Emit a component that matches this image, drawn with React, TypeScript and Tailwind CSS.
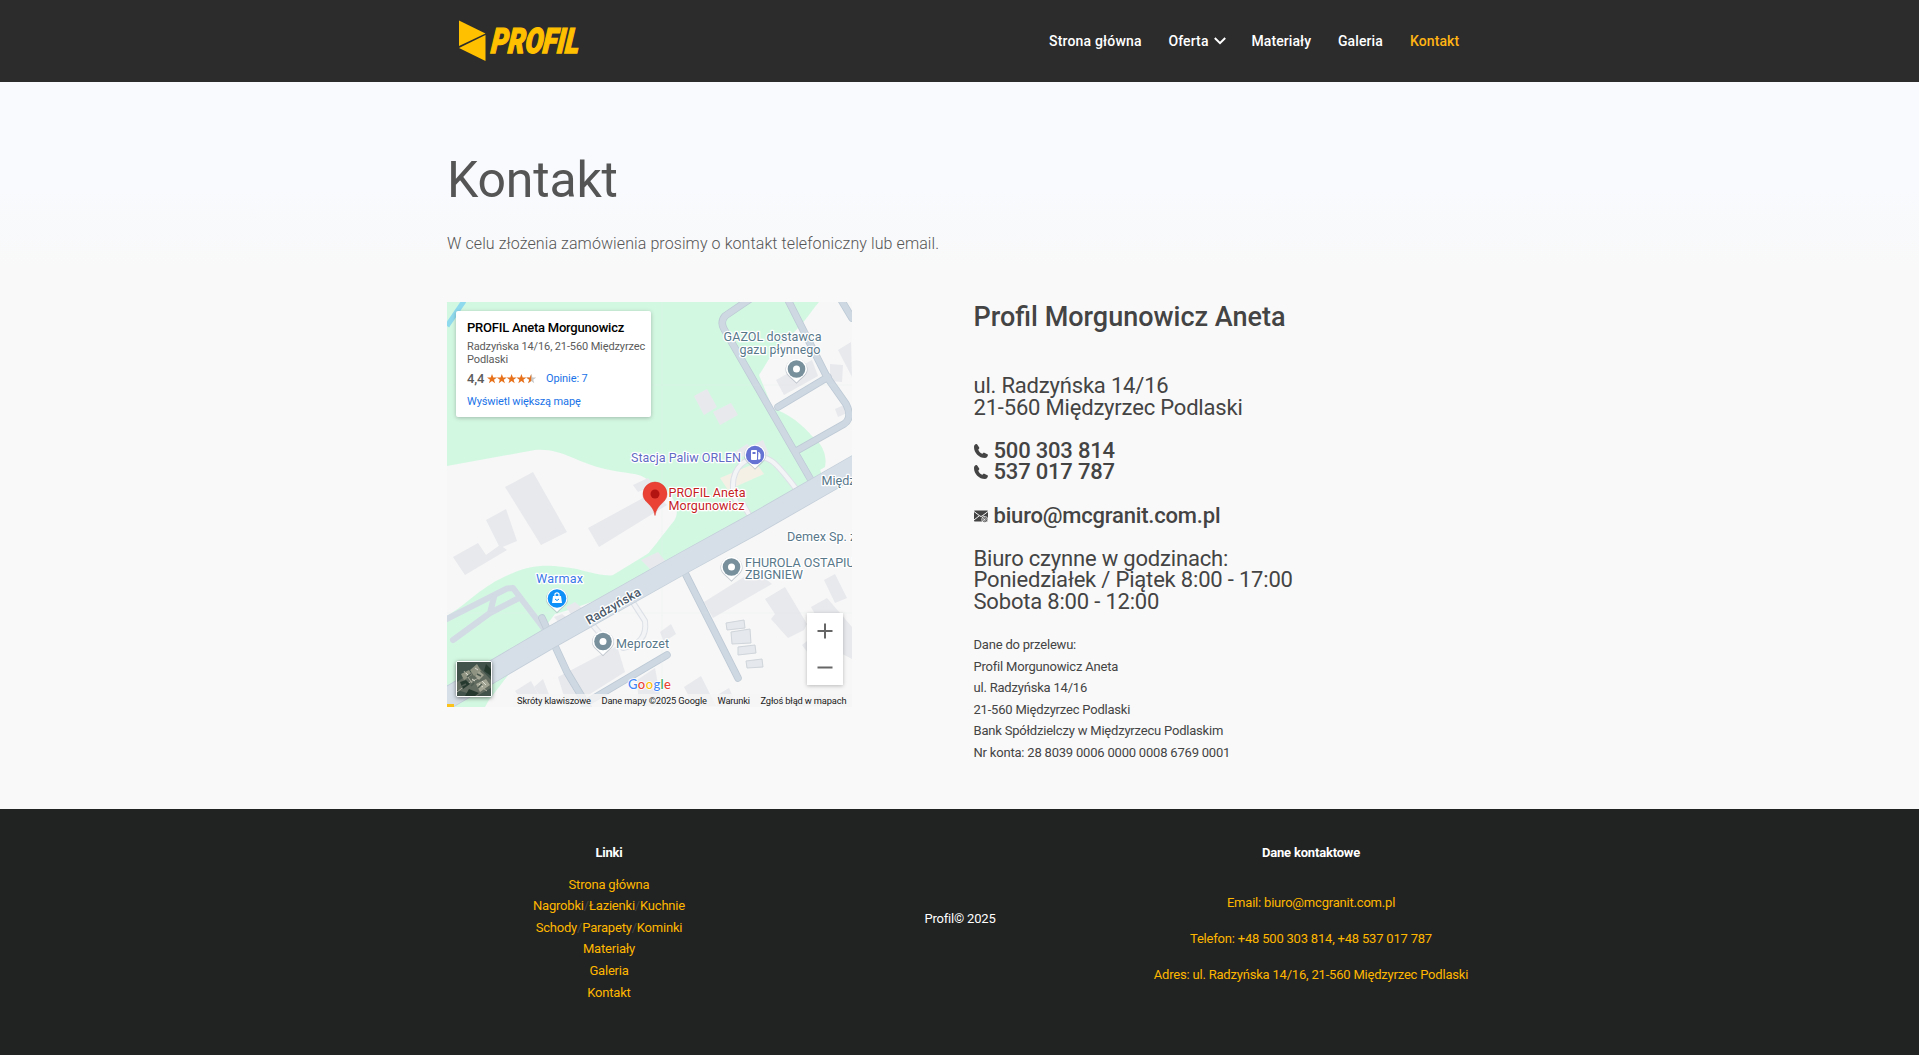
import React from "react";

type Label = {
  x: number;
  y: number;
  text: string;
  fill: string;
  width?: number;
};

const labels: Label[] = [
  { x: 276.500, y: 39, text: "GAZOL dostawca", fill: "#58788a", width: 98 },
  { x: 292.500, y: 52, text: "gazu płynnego", fill: "#58788a", width: 81 },
  { x: 184, y: 160, text: "Stacja Paliw ORLEN", fill: "#5f6bc4", width: 110 },
  { x: 374.500, y: 183, text: "Międzyrzec", fill: "#58788a" },
  { x: 221.500, y: 195, text: "PROFIL Aneta", fill: "#c5221f", width: 77 },
  { x: 221.500, y: 207.500, text: "Morgunowicz", fill: "#c5221f", width: 76 },
  { x: 340, y: 239, text: "Demex Sp. z o.o.", fill: "#58788a" },
  { x: 298, y: 265, text: "FHUROLA OSTAPIUK", fill: "#58788a" },
  { x: 298, y: 277, text: "ZBIGNIEW", fill: "#58788a", width: 58 },
  { x: 89, y: 281, text: "Warmax", fill: "#3b78e7", width: 47 },
  { x: 169, y: 346, text: "Meprozet", fill: "#58788a", width: 53 },
];

const buildings = [
  "58,185 86,170 120,230 94,243",
  "39,218 59,207 70,239 53,246",
  "6,255 31,241 39,253 53,243 60,248 18,273",
  "141,226 207,190 220,203 152,245",
  "186,183 201,176 207,183 191,190",
  "194,258 211,250 219,260 204,268",
  "119,305 128,300 136,307 126,315",
  "107,315 115,312 122,317 113,322",
  "111,375 170,344 178,370 124,404 120,404",
  "68,389 84,379 97,403 79,404",
  "87,385 96,377 106,403 99,404",
  "247,94 260,87 270,105 257,113",
  "266,110 284,101 291,113 273,123",
  "329,78 365,58 371,74 337,93",
  "391,48 404,40 405,75",
  "383,62 396,63 395,80 383,79",
  "388,107 397,103 400,111 391,115",
  "286,151 300,142 307,148 295,155",
  "308,142 316,138 322,152 311,157",
  "257,300 308,268 325,282 266,316",
  "318,297 338,285 360,322 357,328 341,336 324,317 328,312",
  "377,278 388,272 400,296 388,301",
  "364,305 380,296 405,325 405,357 384,346 374,323",
  "355,343 364,336 376,350 366,358",
  "213,330 224,322 229,332 217,340",
  "237,385 254,374 269,404 247,404",
  "190,378 208,366 215,404 192,404",
  "272,392 282,386 290,404 270,404",
  "350,402 375,393 376,404 350,404",
];

const outlined = [
  "279,321 297,318 298,326 280,328",
  "284,330 303,327 304,341 285,342",
  "291,345 308,343 309,351 291,353",
  "299,359 315,357 316,365 300,366",
];

function Pin({ x, y, fill, r = 8 }: { x: number; y: number; fill: string; r?: number }) {
  return (
    <g transform={`translate(${x} ${y})`}>
      <path d="M-11 0A11 11 0 0 1 11 0C11 5 7 7 0 14C-7 7-11 5-11 0Z" fill="#9aa5b1" opacity=".55" transform="translate(0 .8)" />
      <path d="M-10.500 0A10.500 10.500 0 0 1 10.500 0C10.500 5 6.500 7 0 13.500C-6.500 7-10.500 5-10.500 0Z" fill="#fff" />
      <circle r={r + 0.8} fill={fill} />
    </g>
  );
}

function Map() {
  return (
    <svg width="405" height="405" viewBox="0 0 405 405" className="block font-[Roboto,sans-serif]">
      <rect width="405" height="405" fill="#f7f7f7" />
      <path d="M0 0H372C362 12 354 26 338 38C326 48 319 63 312 73L326 107C345 112 360 128 365 134C377 143 380 155 378 165L216 263C195 280 150 300 108 312L42 398L38 405H0V314C23 300 35 283 66 271C85 262 105 262 130 267C160 275 172 277 190 264C207 246 213 236 227 219C234 207 227 197 220 189L201 178C192 170 178 172 158 167C130 161 115 146 88 148L0 164Z" fill="#d3f8e2" />
      <path d="M372 164L330 184L299 205L228 235L122 300L108 309C150 300 184 287 240 260C310 224 330 212 376 177Z" fill="#d3f8e2" />
      <path d="M0 24L17 -1" stroke="#90daee" strokeWidth="5" />
      <g fill="#e8e9ed">
        {buildings.map((p) => (
          <polygon key={p} points={p} />
        ))}
      </g>
      <polygon points="272,172 308,157 316,168 280,184" fill="#f5f0e6" transform="translate(1 4)" />
      <g fill="#e5e8ec" stroke="#cfd5db">
        {outlined.map((p) => (
          <polygon key={p} points={p} />
        ))}
      </g>
      <g fill="none" strokeLinecap="round" strokeLinejoin="round">
        <g stroke="#d2dae4" strokeWidth="6">
          <path d="M-4 319L60 286.500L66 286L101 332" />
          <path d="M6 338L43 311L72 296M47 295L43 311" />
        </g>
        <g stroke="#dde1e7" strokeWidth="6">
          <path d="M292 206L287 194C283 175 290 162 303 157C322 150 330 162 350 188M305 218L296 202" />
          <path d="M187 302L198 319C200 335 192 343 176 346M144 321L155 334" />
        </g>
        <g stroke="#f2f4f6" strokeWidth="4">
          <path d="M292 206L287 194C283 175 290 162 303 157C322 150 330 162 350 188M305 218L296 202" />
          <path d="M187 302L198 319C200 335 192 343 176 346M144 321L155 334" />
        </g>
        <g stroke="#bdc9d5" strokeWidth="7.500">
          <path d="M95 316L120 370L141 405M237 269L291 376M137 402L220 353" />
          <path d="M306 -5L278 14Q273 20 277 27L368 185M340 -4L380 75L399 102Q406 116 397 122L351 148M381 75L331 105M393 -4L405 16" />
        </g>
        <g stroke="#cdd8e2" strokeWidth="6">
          <path d="M95 316L120 370L141 405M237 269L291 376M137 402L220 353" />
          <path d="M306 -5L278 14Q273 20 277 27L368 185M340 -4L380 75L399 102Q406 116 397 122L351 148M381 75L331 105M393 -4L405 16" />
        </g>
        <path d="M-8 401L101 337L238 260L309 221L410 163" stroke="#c3ced9" strokeWidth="22" />
        <path d="M-8 401L101 337L238 260L309 221L410 163" stroke="#d6dfe8" strokeWidth="20.500" />
      </g>
      <path d="M0 311H405M0 83H405M215 0V405" stroke="#dce4e7" strokeWidth=".5" opacity=".35" />
      <Pin x={349.5} y={67} fill="#78909c" />
      <circle cx="349.500" cy="67" r="3.500" fill="#fff" />
      <Pin x={308} y={153} fill="#6673d3" r={8.4} />
      <path d="M304.500 148.500H309.500V157.500H304.500ZM311.500 150L313 152V157H311" fill="#fff" stroke="#fff" />
      <path d="M305.500 150H308.500V152H305.500Z" fill="#6673d3" />
      <Pin x={284.5} y={265} fill="#78909c" />
      <circle cx="284.500" cy="265" r="3.500" fill="#fff" />
      <Pin x={156} y={339.5} fill="#78909c" />
      <circle cx="156" cy="339.500" r="3.500" fill="#fff" />
      <Pin x={110} y={296.5} fill="#0f8ff8" r={8.5} />
      <path d="M106 294H114L115 301H105Z" fill="#fff" />
      <path d="M108 295V292Q110 290 112 292V295" fill="none" stroke="#fff" strokeWidth="1.200" />
      <path d="M108 297Q110 300 112 297" fill="none" stroke="#0f8ff8" />
      <path d="M208 213.500C206 201 196 201 196 192A12 12 0 0 1 220 192C220 201 210 201 208 213.500Z" fill="#ea4335" stroke="#d93025" strokeWidth=".5" />
      <circle cx="208" cy="192" r="4.500" fill="#b31412" />
      <g fontSize="12.600" paintOrder="stroke" stroke="#fff" strokeWidth="2.500" strokeLinejoin="round">
        {labels.map((l) => (
          <text key={l.text} x={l.x} y={l.y} fill={l.fill} textLength={l.width} lengthAdjust="spacing">
            {l.text}
          </text>
        ))}
        <text x="142" y="323" fill="#4c5b6c" fontWeight="500" textLength="61" transform="rotate(-30 142 323)">
          Radzyńska
        </text>
      </g>
      <rect y="402" width="7" height="3" fill="#fbc21c" />
      <rect x="66" y="392" width="339" height="13" fill="#f5f5f5" opacity=".8" />
      <g fontSize="9.300" fill="#1a1a1a">
        <text x="70" y="402" textLength="74">Skróty klawiszowe</text>
        <text x="154.500" y="402" textLength="105.500">Dane mapy ©2025 Google</text>
        <text x="270.500" y="402" textLength="32.500">Warunki</text>
        <text x="313.500" y="402" textLength="86">Zgłoś błąd w mapach</text>
      </g>
      <text x="181" y="386.500" fontSize="13" fontWeight="500" textLength="43" paintOrder="stroke" stroke="#fff" strokeWidth="1.500" fontFamily="Lato, sans-serif">
        <tspan fill="#4285f4">G</tspan>
        <tspan fill="#ea4335">o</tspan>
        <tspan fill="#fbbc04">o</tspan>
        <tspan fill="#4285f4">g</tspan>
        <tspan fill="#34a853">l</tspan>
        <tspan fill="#ea4335">e</tspan>
      </text>
    </svg>
  );
}

const star = "M5 0L6.300 3.500H10L7 5.700L8.100 9.300L5 7.100L1.900 9.300L3 5.700L0 3.500H3.700Z";

function MapCard() {
  return (
    <div className="absolute left-[9px] top-[9px] h-[106px] w-[195px] rounded-[2px] bg-white px-[11px] pt-2 shadow-[0_1px_4px_rgba(0,0,0,0.25)]">
      <div className="text-[13px] font-medium leading-[17px] tracking-[-0.23px] text-black">PROFIL Aneta Morgunowicz</div>
      <div className="mt-1 text-[11px] leading-[13px] tracking-[-0.12px] text-[#5b5b5b]">
        Radzyńska 14/16, 21-560 Międzyrzec
        <br />
        Podlaski
      </div>
      <div className="mt-1 flex h-[18px] items-center">
        <span className="w-5 text-[13px] font-medium leading-[18px] tracking-[-0.2px] text-[#5b5b5b]">4,4</span>
        <svg width="50" height="10" viewBox="0 0 50 10">
          {[0, 1, 2, 3].map((n) => (
            <path key={n} d={star} fill="#e7711b" transform={`translate(${n * 9.8} 0)`} />
          ))}
          <path d={star} fill="#c7c7c7" transform="translate(39.2 0)" />
          <path d="M44.200 0V7.100L41.100 9.300L42.200 5.700L39.200 3.500H42.900Z" fill="#e7711b" />
        </svg>
        <span className="ml-[9px] mt-px text-[11px] tracking-[-0.1px] text-[#1a73e8]">Opinie: 7</span>
      </div>
      <div className="mt-[5px] text-[11px] leading-[18px] tracking-[-0.12px] text-[#1a73e8]">Wyświetl większą mapę</div>
    </div>
  );
}

function Satellite() {
  return (
    <div className="absolute bottom-[10px] left-[9px] h-9 w-9 rounded-[2px] border border-white shadow-[0_1px_4px_rgba(0,0,0,0.5)]">
      <svg width="34" height="34" viewBox="0 0 34 34">
        <rect width="34" height="34" fill="#41534b" />
        <path d="M0 20L14 10L20 3L34 18V26L20 34L0 28Z" fill="#626b5f" />
        <path d="M4 12L12 8L15 13L7 18ZM13 8L20 2L24 9L17 14Z" fill="#8f9482" />
        <path d="M22 9L27 13L22 18L18 14ZM19 22L29 17L33 23L23 30Z" fill="#a2a493" />
        <path d="M0 30L13 20L22 16M7 9L15 21M20 22L30 29" stroke="#a9ab9c" fill="none" />
        <path d="M3 20L9 18L13 22L6 27ZM12 27L22 31L18 34H8ZM29 2L34 7V14L27 9Z" fill="#26392f" />
        <path d="M9 11L11 13M18 6L21 8M22 22L26 25M25 19L29 23M15 17L18 19" stroke="#dadbcf" />
        <path d="M10 15L14 12M20 12L24 14M21 26L25 22M5 24L9 22M14 24L17 21" stroke="#4d5a50" strokeWidth="1.500" />
      </svg>
    </div>
  );
}

function ZoomButtons() {
  return (
    <div className="absolute bottom-[22px] right-[9px] h-[72px] w-9 bg-white shadow-[0_1px_4px_rgba(0,0,0,0.25)]">
      <svg width="36" height="72" viewBox="0 0 36 72" fill="none" stroke="#666" strokeWidth="2">
        <path d="M10.500 18H25.500M18 10.500V25.500M10.500 54.500H25.500" />
      </svg>
    </div>
  );
}

function Phone() {
  return (
    <svg width="14" height="14" viewBox="0 0 14 14" className="mr-[6px] shrink-0" fill="#444">
      <path d="M0 3C0 1.500 1 .3 2.300 .1Q3 0 3.400.7L5.200 3.600Q5.500 4.200 5 4.700L4.300 5.400C4.700 7.300 6.600 9.200 8.500 9.700L9.200 9Q9.700 8.400 10.300 8.700L13.400 10.200Q14.100 10.600 13.900 11.300C13.600 12.800 12.400 14 11 14C5 14 0 9 0 3Z" />
    </svg>
  );
}

function Mail() {
  return (
    <svg width="14" height="14" viewBox="0 0 14 14" className="mr-[6px] mt-px shrink-0">
      <rect y="1.500" width="14" height="11" rx=".8" fill="#444" />
      <path d="M0 2.500L6 7.100Q7 7.700 8 7.100L14 2.500M0 11L5 7M9.500 7L11 8" fill="none" stroke="#f9f9f9" />
      <circle cx="10.800" cy="10.500" r="3.300" fill="#f9f9f9" />
      <circle cx="10.800" cy="10.500" r="2.300" fill="none" stroke="#444" strokeWidth=".8" />
      <path d="M11.800 9.300V11.300H13M11.700 10.500A1 1 0 1 1 11.600 10" fill="none" stroke="#444" strokeWidth=".7" />
    </svg>
  );
}

function Logo() {
  return (
    <svg width="124" height="44" viewBox="0 0 124 44" className="mt-5" fill="#ffc000">
      <path d="M0 .5L26.500 13.500L0 26Z" />
      <path d="M26.500 15V41L0 28Z" />
      <text
        transform="translate(31.500 33) skewX(-6)"
        fontFamily="Roboto, sans-serif"
        fontStyle="italic"
        fontWeight="900"
        fontSize="35"
        textLength="88"
        lengthAdjust="spacingAndGlyphs"
        stroke="#ffc000"
        strokeWidth="1.400"
      >PROFIL</text>
    </svg>
  );
}

export default function App() {
  return (
    <div className="flex h-[1055px] w-[1919px] flex-col overflow-hidden whitespace-nowrap bg-[#f9f9f9] font-[Roboto,sans-serif] text-[#444]">
      <header className="flex h-[82px] shrink-0 items-start bg-[#2c2c2c] pl-[459px]">
        <Logo />
        <nav className="ml-[466px] mt-[31px] flex text-[14px] font-medium leading-5 tracking-[0.08px] text-white">
          <span className="w-[119.500px] tracking-[0.18px]">Strona główna</span>
          <span className="flex w-[83px] items-center tracking-[0.1px]">
            Oferta
            <svg width="12" height="8" viewBox="0 0 12 8" className="ml-[5px]" fill="none" stroke="#fff" strokeWidth="2">
              <path d="M.8 1L6 6.200L11.200 1" />
            </svg>
          </span>
          <span className="w-[86.500px]">Materiały</span>
          <span className="w-[72px]">Galeria</span>
          <span className="text-[#ffb414]">Kontakt</span>
        </nav>
      </header>

      <main className="h-[727px] shrink-0 bg-linear-to-b from-[#f8fafd] from-15% to-[#f9f9f9] to-26% pl-[447px]">
        <h1 className="pt-[68px] text-[50px] leading-[60px] tracking-[-0.2px] text-[#555]">Kontakt</h1>
        <p className="mt-[22px] text-[16px] font-light leading-6 tracking-[0.09px] text-[#555]">
          W celu złożenia zamówienia prosimy o kontakt telefoniczny lub email.
        </p>
        <div className="mt-[46px] flex">
          <div className="relative h-[405px] w-[405px] overflow-hidden">
            <Map />
            <MapCard />
            <Satellite />
            <ZoomButtons />
          </div>
          <div className="ml-[121.500px]">
            <h2 className="text-[27px] font-medium leading-[30px]">Profil Morgunowicz Aneta</h2>
            <div className="mt-[43px] text-[22px] leading-[21.600px] tracking-[-0.19px]">
              <div>ul. Radzyńska 14/16</div>
              <div>21-560 Międzyrzec Podlaski</div>
              <div className="mt-[21.600px] flex items-center font-medium"><Phone />500 303 814</div>
              <div className="flex items-center font-medium"><Phone />537 017 787</div>
              <div className="mt-[21.600px] flex items-center font-medium"><Mail />biuro@mcgranit.com.pl</div>
              <div className="mt-[21.600px]">Biuro czynne w godzinach:</div>
              <div>Poniedziałek / Piątek 8:00 - 17:00</div>
              <div>Sobota 8:00 - 12:00</div>
            </div>
            <div className="mt-[21.500px] text-[13px] leading-[21.600px] tracking-[-0.2px]">
              <div>Dane do przelewu:</div>
              <div>Profil Morgunowicz Aneta</div>
              <div>ul. Radzyńska 14/16</div>
              <div>21-560 Międzyrzec Podlaski</div>
              <div>Bank Spółdzielczy w Międzyrzecu Podlaskim</div>
              <div>Nr konta: 28 8039 0006 0000 0008 6769 0001</div>
            </div>
          </div>
        </div>
      </main>

      <footer className="flex flex-1 bg-[#212322] pl-[434px] text-center text-[13px] leading-[21.600px] tracking-[-0.2px] text-[#ffb700]">
        <section className="w-[350px] pt-[33px]">
          <h3 className="mb-[10px] font-bold text-white">Linki</h3>
          <div>Strona główna</div>
          <div>Nagrobki<span className="text-[#444]">/</span>Łazienki<span className="text-[#444]">/</span>Kuchnie</div>
          <div>Schody<span className="text-[#444]">/</span>Parapety<span className="text-[#444]">/</span>Kominki</div>
          <div>Materiały</div>
          <div>Galeria</div>
          <div>Kontakt</div>
        </section>
        <section className="w-[352px] pt-[99px] text-white">Profil© 2025</section>
        <section className="ml-[2px] w-[346px] pt-[33px]">
          <h3 className="mb-[28px] font-bold text-white">Dane kontaktowe</h3>
          <div className="mb-[14.400px]">Email: biuro@mcgranit.com.pl</div>
          <div className="mb-[14.400px]">Telefon: +48 500 303 814, +48 537 017 787</div>
          <div>Adres: ul. Radzyńska 14/16, 21-560 Międzyrzec Podlaski</div>
        </section>
      </footer>
    </div>
  );
}
